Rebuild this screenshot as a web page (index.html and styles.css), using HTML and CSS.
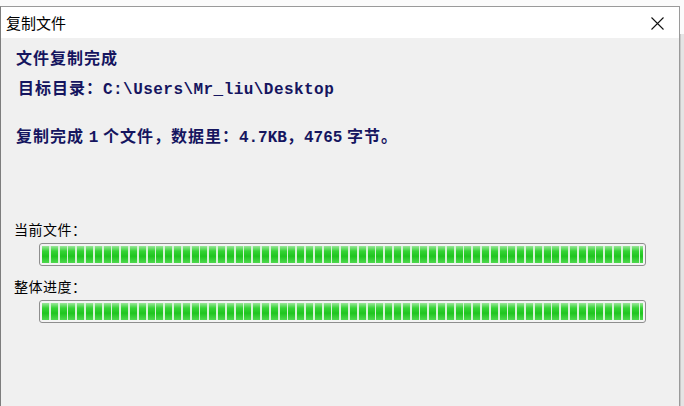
FILE: index.html
```html
<!DOCTYPE html>
<html lang="zh-CN">
<head>
    <meta charset="UTF-8">
    <meta name="viewport" content="width=device-width, initial-scale=1.0">
    <title>复制文件</title>
    <link rel="stylesheet" href="styles.css">
</head>
<body>

    <div class="desk">
        <div class="window">
            <div class="titlebar">
                <span class="title">复制文件</span>
                <span class="close">
                    <svg width="13" height="13" viewBox="0 0 13 13">
                        <path d="M0.5 0.5 L12.5 12.5 M12.5 0.5 L0.5 12.5" stroke="#111" stroke-width="1.1" fill="none"/>
                    </svg>
                </span>
            </div>

            <div class="content">
                <h1 class="done">文件复制完成</h1>
                <p class="target">目标目录：<span class="mono path">C:\Users\Mr_liu\Desktop</span></p>
                <p class="summary">复制完成 <span class="mono">1</span> 个文件，数据里：<span class="mono">4.7KB</span>，<span class="mono">4765</span> 字节。</p>

                <div class="label first">当前文件：</div>
                <div class="bar"><div class="fill" style="width: 100%;"></div></div>

                <div class="label">整体进度：</div>
                <div class="bar"><div class="fill" style="width: 100%;"></div></div>
            </div>
        </div>
        <div class="edge"></div>
    </div>

</body>
</html>
```

FILE: styles.css
```css
html, body {
    margin: 0;
    height: 100%;
}
body {
    background: #fbfbfb;
    font-family: "Noto Sans CJK SC", "Noto Sans", sans-serif;
    overflow: hidden;
}
.desk {
    display: flex;
    height: 406px;
    padding-top: 6px;
    box-sizing: border-box;
}
.window {
    width: 680px;
    border-top: 1px solid #9a9a9a;
    border-left: 1px solid #7d7d7d;
    border-right: 1px solid #9a9a9a;
    box-sizing: border-box;
    background: #f0f0f0;
    display: flex;
    flex-direction: column;
}
.edge {
    flex: 1;
    margin-top: 28px;
    background: #e4e4e4;
    border-left: 1px solid #c8c8c8;
}
.titlebar {
    height: 31px;
    background: #fff;
    display: flex;
    align-items: center;
    justify-content: space-between;
    padding: 0 15px 0 5px;
}
.title {
    font-size: 15px;
    color: #000;
}
.close {
    display: flex;
    padding-top: 1px;
}
.content {
    padding: 9px 0 0 15px;
    color: #15155f;
}
.done, .target, .summary {
    margin: 0;
    height: 20px;
    line-height: 20px;
    font-size: 16px;
    font-weight: bold;
    letter-spacing: 1px;
    white-space: nowrap;
}
.target {
    margin-top: 10px;
    padding-left: 2px;
}
.summary {
    margin-top: 28px;
}
.mono {
    font-family: "Liberation Mono", "DejaVu Sans Mono", monospace;
    font-size: 16px;
    letter-spacing: 0;
}
.mono.path {
    letter-spacing: 0.45px;
}
.label {
    height: 20px;
    line-height: 20px;
    font-size: 14px;
    color: #000;
    margin: 10px 0 0 -2px;
    letter-spacing: 0.5px;
}
.label.first {
    margin-top: 74px;
}
.bar {
    width: 607px;
    height: 23px;
    margin: 4px 0 0 23px;
    border: 1px solid #8e8e8e;
    border-radius: 3px;
    padding: 2px 2px;
    box-sizing: border-box;
    background: #f4f4f4;
}
.fill {
    height: 100%;
    background:
        repeating-linear-gradient(90deg, transparent 0 7px, #d6f3d6 7px 8.8px),
        linear-gradient(to bottom, #9be69b 0%, #35d335 30%, #1fc51f 60%, #4fd94f 100%);
}
```
